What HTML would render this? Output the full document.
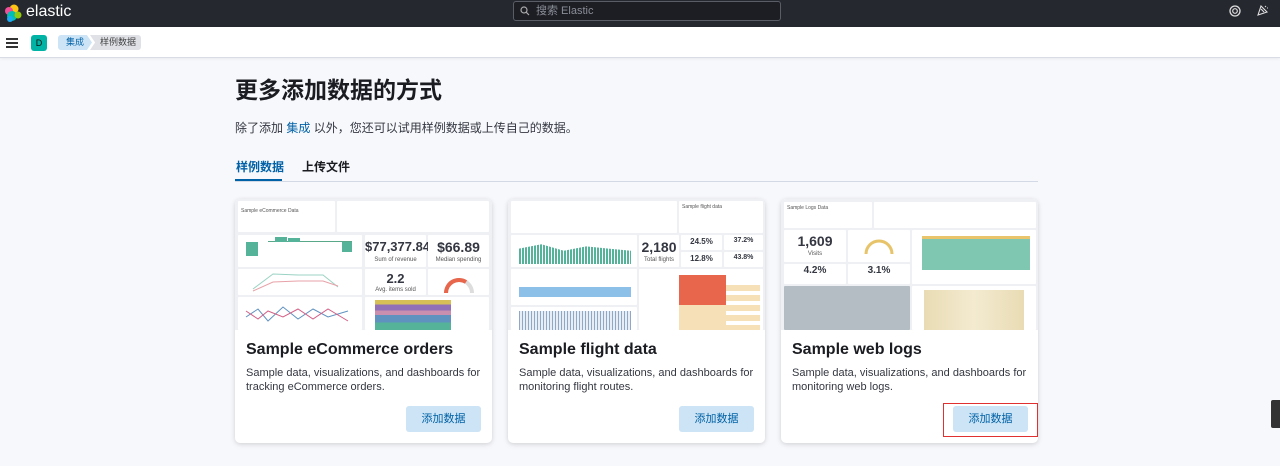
<!DOCTYPE html>
<html><head><meta charset="utf-8"><style>
*{box-sizing:border-box;margin:0;padding:0}
body{width:1280px;height:466px;overflow:hidden;background:#f7f8fc;font-family:"Liberation Sans","Noto Sans CJK SC",sans-serif;color:#343741;position:relative}
.top{position:absolute;left:0;top:0;width:1280px;height:27px;background:#25282f}
.search{position:absolute;left:513px;top:1px;width:268px;height:20px;border:1px solid #5a5d66;border-radius:3px;background:#1d1e24;color:#8a8d96;font-size:11px;line-height:18px;padding-left:22px}
.bar2{position:absolute;left:0;top:27px;width:1280px;height:31px;background:#fff;border-bottom:1px solid #d9dce5;box-shadow:0 1px 3px rgba(0,0,0,.06)}
.abs{position:absolute}
h1{position:absolute;left:235px;top:71px;font-size:23px;font-weight:700;color:#1a1c21}
.sub{position:absolute;left:235px;top:119px;font-size:12px;color:#343741}
.card{position:absolute;top:199px;width:257px;height:244px;background:#fff;border-radius:5px;box-shadow:0 1px 4px rgba(0,0,0,.12),0 2px 8px rgba(0,0,0,.05);overflow:hidden}
.img{position:absolute;left:0;top:0;width:257px;height:131px;background:#eef0f4;overflow:hidden}
.p{position:absolute;background:#fff;border-radius:1px}
.ct{position:absolute;left:11px;top:142px;font-size:16px;font-weight:700;color:#1a1c21}
.cd{position:absolute;left:11px;top:167px;font-size:11px;line-height:14px;color:#343741;width:235px}
.btn{position:absolute;top:207px;width:75px;height:26px;background:#cce4f5;color:#0061a6;font-size:11px;line-height:26px;text-align:center;border-radius:3px}
.big{position:absolute;font-weight:700;color:#343741;text-align:center}
.sm{position:absolute;font-size:6px;color:#555;text-align:center}
</style></head><body>
<div class="top">
 <svg class="abs" style="left:4px;top:4px" width="18" height="19" viewBox="0 0 18 19"><circle cx="10" cy="5" r="4.5" fill="#fec514"/><circle cx="5" cy="7" r="4" fill="#f04e98"/><circle cx="8" cy="12" r="5" fill="#00bfb3"/><circle cx="14" cy="11" r="3.5" fill="#93c90e"/><circle cx="6" cy="15" r="3" fill="#1ba9f5"/></svg>
 <div class="abs" style="left:26px;top:3px;color:#fff;font-size:16px">elastic</div>
 <div class="search"><svg class="abs" style="left:6px;top:4px" width="10" height="10" viewBox="0 0 10 10"><circle cx="4" cy="4" r="3" fill="none" stroke="#aaa" stroke-width="1.2"/><path d="M6.3 6.3L9 9" stroke="#aaa" stroke-width="1.2"/></svg>搜索 Elastic</div>
 <svg class="abs" style="left:1229px;top:5px" width="12" height="12" viewBox="0 0 12 12"><circle cx="6" cy="6" r="5" fill="none" stroke="#ddd" stroke-width="1.3"/><circle cx="6" cy="6" r="2.3" fill="none" stroke="#ddd" stroke-width="1.2"/></svg>
 <svg class="abs" style="left:1256px;top:4px" width="13" height="13" viewBox="0 0 13 13"><path d="M2 11L5 2l6 6z M5 5l3 3 M9 2l1 1 M11 4l1 0" fill="none" stroke="#ddd" stroke-width="1.1"/></svg>
</div>
<div class="bar2">
 <div class="abs" style="left:6px;top:11px;width:12px;height:2px;background:#333;box-shadow:0 4px 0 #333,0 8px 0 #333"></div>
 <div class="abs" style="left:31px;top:8px;width:16px;height:16px;border-radius:3px;background:#00b3a4;color:#111;font-size:9px;line-height:16px;text-align:center">D</div>
 <div class="abs" style="left:58px;top:8px;width:34px;height:15px;background:#cce4f5;color:#0061a6;font-size:9px;line-height:15px;padding-left:8px;border-radius:3px 0 0 3px;clip-path:polygon(0 0,85% 0,100% 50%,85% 100%,0 100%)">集成</div>
 <div class="abs" style="left:90px;top:8px;width:51px;height:15px;background:#dfe1e6;color:#444;font-size:9px;line-height:15px;padding-left:10px;border-radius:0 3px 3px 0;clip-path:polygon(0 0,100% 0,100% 100%,0 100%,10% 50%)">样例数据</div>
</div>
<h1>更多添加数据的方式</h1>
<div class="sub">除了添加 <span style="color:#0061a6">集成</span> 以外，您还可以试用样例数据或上传自己的数据。</div>
<div class="abs" style="left:236px;top:158px;font-size:12px;font-weight:700;color:#0061a6">样例数据</div>
<div class="abs" style="left:302px;top:158px;font-size:12px;font-weight:700;color:#1a1c21">上传文件</div>
<div class="abs" style="left:235px;top:181px;width:803px;height:1px;background:#d3dae6"></div>
<div class="abs" style="left:235px;top:179px;width:47px;height:2px;background:#0061a6"></div>

<div class="card" style="left:235px">
 <div class="img">
  <div class="p" style="left:3px;top:2px;width:97px;height:31px"><div class="sm" style="left:3px;top:7px;font-size:5px">Sample eCommerce Data</div></div>
  <div class="p" style="left:102px;top:2px;width:152px;height:31px"></div>
  <div class="p" style="left:3px;top:36px;width:124px;height:32px"><div class="abs" style="left:30px;top:6px;width:84px;height:1px;background:#5aa88a"></div><div class="abs" style="left:8px;top:7px;width:12px;height:14px;background:#54b399"></div><div class="abs" style="left:37px;top:2px;width:12px;height:5px;background:#54b399"></div><div class="abs" style="left:50px;top:3px;width:12px;height:4px;background:#54b399"></div><div class="abs" style="left:104px;top:7px;width:10px;height:10px;background:#54b399"></div></div>
  <div class="p" style="left:130px;top:36px;width:61px;height:32px"><div class="big" style="left:0;width:61px;top:4px;font-size:13px">$77,377.84</div><div class="sm" style="left:0;width:61px;top:22px">Sum of revenue</div></div>
  <div class="p" style="left:193px;top:36px;width:61px;height:32px"><div class="big" style="left:0;width:61px;top:4px;font-size:14px">$66.89</div><div class="sm" style="left:0;width:61px;top:22px">Median spending</div></div>
  <div class="p" style="left:3px;top:70px;width:124px;height:26px"><svg width="124" height="26"><path d="M15 20L35 5L60 6L85 6L100 18" stroke="#9bd3c3" fill="none"/><path d="M15 22L35 13L60 12L85 12L100 17" stroke="#e7a2a8" fill="none"/></svg></div>
  <div class="p" style="left:130px;top:70px;width:61px;height:26px"><div class="big" style="left:0;width:61px;top:2px;font-size:13px">2.2</div><div class="sm" style="left:0;width:61px;top:18px">Avg. items sold</div></div>
  <div class="p" style="left:193px;top:70px;width:61px;height:26px"><svg width="61" height="26"><path d="M18 24A13 13 0 0 1 44 24" stroke="#ddd" stroke-width="4" fill="none"/><path d="M18 24A13 13 0 0 1 38 13" stroke="#e7664c" stroke-width="4" fill="none"/></svg></div>
  <div class="p" style="left:3px;top:98px;width:124px;height:33px"><svg width="124" height="33"><path d="M8 20L20 12L30 24L45 10L60 22L75 12L90 20L110 14" stroke="#6092c0" fill="none"/><path d="M8 14L20 22L30 14L45 20L60 12L75 22L90 12L110 24" stroke="#d36086" fill="none"/></svg></div>
  <div class="p" style="left:130px;top:98px;width:124px;height:33px"><div class="abs" style="left:10px;top:3px;width:76px;height:30px;background:linear-gradient(#d6bf57 0 15%,#9170b8 15% 35%,#ca8eae 35% 50%,#6092c0 50% 75%,#54b399 75%)"></div></div>
 </div>
 <div class="ct">Sample eCommerce orders</div>
 <div class="cd">Sample data, visualizations, and dashboards for tracking eCommerce orders.</div>
 <div class="btn" style="left:171px">添加数据</div>
</div>

<div class="card" style="left:508px">
 <div class="img">
  <div class="p" style="left:3px;top:2px;width:166px;height:32px"></div>
  <div class="p" style="left:171px;top:2px;width:84px;height:32px"><div class="sm" style="left:3px;top:3px;font-size:5px">Sample flight data</div></div>
  <div class="p" style="left:3px;top:36px;width:126px;height:32px"><div class="abs" style="left:8px;top:7px;width:112px;height:22px;background:repeating-linear-gradient(90deg,#54b399 0 2px,#fff 2px 3px);clip-path:polygon(0 30%,20% 10%,40% 40%,60% 20%,80% 30%,100% 40%,100% 100%,0 100%)"></div></div>
  <div class="p" style="left:131px;top:36px;width:40px;height:32px"><div class="big" style="left:0;width:40px;top:4px;font-size:14px">2,180</div><div class="sm" style="left:0;width:40px;top:22px">Total flights</div></div>
  <div class="p" style="left:173px;top:36px;width:41px;height:15px"><div class="big" style="left:0;width:41px;top:2px;font-size:8px">24.5%</div></div>
  <div class="p" style="left:216px;top:36px;width:39px;height:15px"><div class="big" style="left:0;width:39px;top:2px;font-size:7px">37.2%</div></div>
  <div class="p" style="left:173px;top:53px;width:41px;height:15px"><div class="big" style="left:0;width:41px;top:2px;font-size:8px">12.8%</div></div>
  <div class="p" style="left:216px;top:53px;width:39px;height:15px"><div class="big" style="left:0;width:39px;top:2px;font-size:7px">43.8%</div></div>
  <div class="p" style="left:3px;top:70px;width:126px;height:36px"><div class="abs" style="left:8px;top:18px;width:112px;height:10px;background:#8cc0e8"></div></div>
  <div class="p" style="left:3px;top:108px;width:126px;height:23px"><div class="abs" style="left:8px;top:4px;width:112px;height:19px;background:repeating-linear-gradient(90deg,#8fa8c8 0 1px,#e8eef6 1px 3px)"></div></div>
  <div class="p" style="left:131px;top:70px;width:124px;height:61px"><div class="abs" style="left:40px;top:6px;width:47px;height:30px;background:#e7664c"></div><div class="abs" style="left:40px;top:36px;width:47px;height:25px;background:#f5e0b8"></div><div class="abs" style="left:87px;top:16px;width:34px;height:45px;background:repeating-linear-gradient(#f5e0b8 0 6px,#fff 6px 10px)"></div></div>
 </div>
 <div class="ct">Sample flight data</div>
 <div class="cd">Sample data, visualizations, and dashboards for monitoring flight routes.</div>
 <div class="btn" style="left:171px">添加数据</div>
</div>

<div class="card" style="left:781px">
 <div class="img">
  <div class="p" style="left:3px;top:3px;width:88px;height:26px"><div class="sm" style="left:3px;top:3px;font-size:5px">Sample Logs Data</div></div>
  <div class="p" style="left:93px;top:3px;width:162px;height:26px"></div>
  <div class="p" style="left:3px;top:31px;width:62px;height:32px"><div class="big" style="left:0;width:62px;top:3px;font-size:14px">1,609</div><div class="sm" style="left:0;width:62px;top:21px">Visits</div></div>
  <div class="p" style="left:67px;top:31px;width:62px;height:32px"><svg width="62" height="32"><path d="M18 24A13 13 0 0 1 44 24" stroke="#e7c46a" stroke-width="3" fill="none"/></svg></div>
  <div class="p" style="left:3px;top:65px;width:62px;height:20px"><div class="big" style="left:0;width:62px;top:1px;font-size:10px">4.2%</div></div>
  <div class="p" style="left:67px;top:65px;width:62px;height:20px"><div class="big" style="left:0;width:62px;top:1px;font-size:10px">3.1%</div></div>
  <div class="p" style="left:131px;top:31px;width:124px;height:54px"><div class="abs" style="left:10px;top:6px;width:108px;height:34px;background:#7fc7b1;border-top:3px solid #e9c46a"></div></div>
  <div class="p" style="left:3px;top:87px;width:126px;height:44px;background:#b4bcc4"></div>
  <div class="p" style="left:131px;top:87px;width:124px;height:44px"><div class="abs" style="left:12px;top:4px;width:100px;height:40px;background:linear-gradient(90deg,#e9dcb4,#f3ead0,#e9dcb4)"></div></div>
 </div>
 <div class="ct">Sample web logs</div>
 <div class="cd">Sample data, visualizations, and dashboards for monitoring web logs.</div>
 <div class="btn" style="left:172px">添加数据</div>
</div>
<div class="abs" style="left:943px;top:403px;width:95px;height:34px;border:1px solid #e03030"></div>
<div class="abs" style="left:1271px;top:400px;width:9px;height:28px;background:#333;border-radius:2px 0 0 2px"></div>
</body></html>
